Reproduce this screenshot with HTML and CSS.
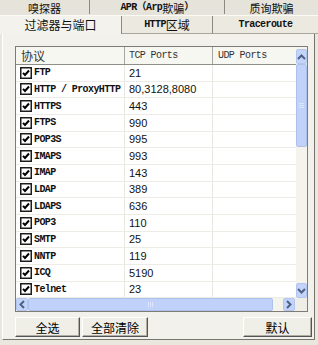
FILE: index.html
```html
<!DOCTYPE html>
<html lang="zh-cn">
<head>
  <meta charset="UTF-8">
  <title>过滤器与端口</title>
  <link rel="stylesheet" href="styles.css">
</head>
<body>
  <div class="dialog">
    <div class="tabrow back">
      <div class="tab w1">嗅探器</div>
      <div class="tab w2"><span class="m">APR（Arp</span>欺骗<span class="m">）</span></div>
      <div class="tab w3 last">质询欺骗</div>
    </div>
    <div class="tabrow front">
      <div class="tab v1 sel">过滤器与端口</div>
      <div class="tab v2"><span class="m">HTTP</span>区域</div>
      <div class="tab v3 last"><span class="m">Traceroute</span></div>
    </div>

    <div class="page">
      <div class="list">
        <div class="list-top">
          <div class="list-main">
            <div class="head">
              <div class="c1 cjk">协议</div>
              <div class="c2 m light">TCP Ports</div>
              <div class="c3 m light">UDP Ports</div>
            </div>
            <div id="rows" class="rows"></div>
          </div>
          <div class="vscroll">
            <div class="sbtn"><svg width="9" height="6" viewBox="0 0 9 6"><path d="M1 5 L4.5 1.5 L8 5" fill="none" stroke="#4d6185" stroke-width="2"/></svg></div>
            <div class="vthumb"><span></span><span></span><span></span></div>
            <div class="vtrack"></div>
            <div class="sbtn"><svg width="9" height="6" viewBox="0 0 9 6"><path d="M1 1 L4.5 4.5 L8 1" fill="none" stroke="#4d6185" stroke-width="2"/></svg></div>
          </div>
        </div>
        <div class="list-bottom">
          <div class="hscroll">
            <div class="hbtn"><svg width="6" height="9" viewBox="0 0 6 9"><path d="M5 1 L1.5 4.5 L5 8" fill="none" stroke="#4d6185" stroke-width="2"/></svg></div>
            <div class="hthumb"><span></span><span></span><span></span></div>
            <div class="htrack"></div>
            <div class="hbtn"><svg width="6" height="9" viewBox="0 0 6 9"><path d="M1 1 L4.5 4.5 L1 8" fill="none" stroke="#4d6185" stroke-width="2"/></svg></div>
          </div>
          <div class="corner"></div>
        </div>
      </div>

      <div class="buttons">
        <button class="btn b1">全选</button>
        <button class="btn b2">全部清除</button>
        <span class="spacer"></span>
        <button class="btn b3">默认</button>
      </div>
    </div>
  </div>

  <script>
    const protocols = [
      ['FTP', '21'],
      ['HTTP / ProxyHTTP', '80,3128,8080'],
      ['HTTPS', '443'],
      ['FTPS', '990'],
      ['POP3S', '995'],
      ['IMAPS', '993'],
      ['IMAP', '143'],
      ['LDAP', '389'],
      ['LDAPS', '636'],
      ['POP3', '110'],
      ['SMTP', '25'],
      ['NNTP', '119'],
      ['ICQ', '5190'],
      ['Telnet', '23']
    ];

    const check = '<svg class="chk" width="12" height="12" viewBox="0 0 12 12">' +
      '<rect x="0.75" y="0.75" width="10.5" height="10.5" fill="#fff" stroke="#1c1c1c" stroke-width="1.5"/>' +
      '<path d="M3 5.8 L5 8 L9 3.5" fill="none" stroke="#000" stroke-width="2"/></svg>';

    const rows = document.getElementById('rows');
    protocols.forEach(([name, tcp]) => {
      const row = document.createElement('div');
      row.className = 'row';
      row.innerHTML = '<div class="c1">' + check + '<span class="m">' + name + '</span></div>' +
        '<div class="c2 num">' + tcp + '</div><div class="c3"></div>';
      rows.appendChild(row);
    });
  </script>
</body>
</html>
```

FILE: styles.css
```css
body {
  margin: 0;
  background: #d8d6cd;
  font-family: "Noto Sans CJK SC", "Liberation Sans", sans-serif;
  font-size: 12px;
  color: #111;
}
.dialog {
  width: 318px;
  height: 345px;
  background: #e9e7de;
  overflow: hidden;
}
.m {
  font-family: "Liberation Mono", "Noto Sans CJK SC", monospace;
  font-size: 10px;
  letter-spacing: -0.6px;
  font-weight: bold;
}
.m.light {
  font-weight: normal;
}
.cjk {
  font-family: "Noto Sans CJK SC", sans-serif;
}

/* tabs */
.tabrow {
  display: flex;
}
.tab {
  display: flex;
  align-items: center;
  justify-content: center;
  border-right: 1px solid #8c8a80;
  box-sizing: border-box;
  line-height: 1;
}
.tab.last {
  border-right: none;
}
.back {
  height: 15px;
  background: #e6e4da;
  border-bottom: 1px solid #fbfaf5;
  font-size: 11px;
}
.back .tab {
  height: 14px;
  padding-top: 2px;
}
.w1 { width: 90px; }
.w2 { width: 135px; }
.w3 { width: 93px; }
.front {
  height: 18px;
}
.front .tab {
  height: 18px;
  background: #ebe9e0;
  border-bottom: 1px solid #a9a79c;
}
.front .tab.sel {
  background: #f3f2ec;
  border-bottom: none;
}
.v1 { width: 122px; }
.v2 { width: 91px; }
.v3 { width: 105px; }

/* page */
.page {
  margin: 0 3px 0 2px;
  height: 306px;
  box-sizing: border-box;
  background: #f2f1eb;
  border-left: 1px solid #fff;
  border-right: 1px solid #77756d;
  border-bottom: 1px solid #77756d;
  padding: 12px 0 0 12px;
}
.list {
  width: 293px;
  height: 266px;
  box-sizing: border-box;
  border: 1px solid #7d7c76;
  background: #fff;
  display: flex;
  flex-direction: column;
}
.list-top {
  display: flex;
  height: 251px;
}
.list-main {
  width: 280px;
  overflow: hidden;
}
.head {
  display: flex;
  height: 18px;
  background: #f7f7f2;
  border-bottom: 1px solid #8f8e88;
  box-sizing: border-box;
  color: #333;
}
.head div {
  display: flex;
  align-items: center;
  border-right: 1px solid #a8a7a0;
  box-sizing: border-box;
}
.c1 { width: 109px; padding-left: 5px; }
.c2 { width: 88px; padding-left: 4px; }
.c3 { width: 83px; }
.head .c2 { padding-left: 4px; }
.head .c3 { padding-left: 5px; border-right: none; }
.head .c1 { padding-left: 5px; }

.rows {
  display: flex;
  flex-direction: column;
}
.row {
  display: flex;
  height: 16.67px;
  flex-shrink: 0;
  border-bottom: 1px solid #ecebe6;
  box-sizing: border-box;
}
.row div {
  display: flex;
  align-items: center;
  box-sizing: border-box;
  border-right: 1px solid #e8e7e2;
}
.row .c1 {
  padding-left: 4px;
  gap: 2px;
}
.row .c3 {
  border-right: none;
}
.chk {
  flex-shrink: 0;
}
.num {
  font-family: "Liberation Sans", sans-serif;
  font-size: 11px;
}

/* scrollbars */
.vscroll {
  width: 11px;
  display: flex;
  flex-direction: column;
  background: #f4f3ec;
  padding-top: 2px;
  box-sizing: border-box;
}
.sbtn, .hbtn {
  background: #c3d4fb;
  border: 1px solid #b3c5ef;
  border-radius: 2px;
  display: flex;
  align-items: center;
  justify-content: center;
  box-sizing: border-box;
}
.sbtn {
  height: 15px;
}
.vthumb {
  height: 83px;
  background: #c1d2fa;
  border: 1px solid #aec1ec;
  border-radius: 2px;
  box-sizing: border-box;
  display: flex;
  flex-direction: column;
  align-items: center;
  justify-content: center;
  gap: 1px;
}
.vthumb span {
  width: 5px;
  height: 1px;
  background: #dde6fc;
}
.vtrack {
  flex: 1;
}
.list-bottom {
  display: flex;
  height: 13px;
}
.hscroll {
  width: 279px;
  display: flex;
  background: #f4f3ec;
}
.hbtn {
  width: 12px;
}
.hthumb {
  width: 245px;
  background: #c1d2fa;
  border: 1px solid #aec1ec;
  border-radius: 2px;
  box-sizing: border-box;
  display: flex;
  align-items: center;
  justify-content: center;
  gap: 1px;
}
.hthumb span {
  width: 1px;
  height: 5px;
  background: #dde6fc;
}
.htrack {
  flex: 1;
}
.corner {
  flex: 1;
  background: #efeee6;
}

/* buttons */
.buttons {
  display: flex;
  margin-top: 5px;
  gap: 2px;
  width: 297px;
}
.spacer {
  flex: 1;
}
.btn {
  height: 20px;
  padding: 0;
  font-family: "Noto Sans CJK SC", sans-serif;
  font-size: 12px;
  color: #000;
  background: #efeee7;
  border: 1px solid;
  border-color: #fff #555 #555 #fff;
  box-shadow: inset -1px -1px 0 #b0aea4;
}
.b1 { width: 65px; }
.b2 { width: 66px; }
.b3 { width: 69px; }
```
